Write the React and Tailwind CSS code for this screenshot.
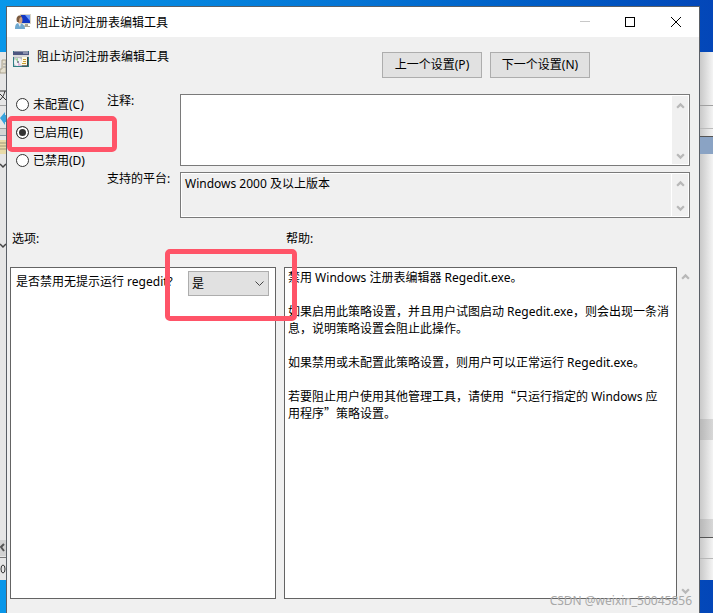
import React, { useState } from "react";

const states = [
  { value: "none", label: "未配置(C)" },
  { value: "enabled", label: "已启用(E)" },
  { value: "disabled", label: "已禁用(D)" },
];

function Chevron({ up, className }) {
  return (
    <svg viewBox="0 0 8 6" className={className} fill="none" stroke="currentColor">
      <path d={up ? "M1 5 4 2 7 5" : "M1 1 4 4 7 1"} strokeWidth="2" />
    </svg>
  );
}

function ScrollBar() {
  return (
    <div className="flex w-4 shrink-0 flex-col justify-between bg-[#f0f0f0] text-[#b8b8b8]">
      <button type="button" aria-label="向上滚动" className="flex h-[18px] items-center justify-center">
        <Chevron up className="h-[7px] w-[9px]" />
      </button>
      <button type="button" aria-label="向下滚动" className="flex h-4 items-center justify-center">
        <Chevron className="h-[7px] w-[9px]" />
      </button>
    </div>
  );
}

function UserIcon() {
  return (
    <svg viewBox="0 0 16 16" className="h-4 w-4 shrink-0">
      <rect x="5" y="0" width="11" height="10" fill="#d9d5c8" />
      <rect x="6" y="1" width="9" height="8" fill="#1238c4" />
      <path d="M10 1h5v6z" fill="#6f9cf5" />
      <path d="M10 10h3v2h2v1H9z" fill="#a9a598" />
      <path d="M0 15c0-4 1-6 4-6s6 2 6 6z" fill="#6fa8cf" />
      <path d="M3 9h3l-1 4z" fill="#e8f0f6" />
      <ellipse cx="5" cy="6" rx="2.500" ry="3.500" fill="#d4a27c" />
      <path d="M2 8C0 2 5 0 7 3c-2 0-3 1-3 5z" fill="#7b5b41" />
    </svg>
  );
}

function PolicyIcon() {
  return (
    <svg viewBox="0 0 16 16" className="h-4 w-4 shrink-0">
      <rect width="16" height="16" fill="#2f7f86" />
      <rect x="1" y="0" width="14" height="1" fill="#8d93a8" />
      <rect x="0" y="1" width="16" height="3" fill="#4c5680" />
      <path d="M10 2h5" stroke="#c9cedb" />
      <rect x="0" y="4" width="16" height="2" fill="#d8d8d8" />
      <rect x="1" y="6" width="14" height="9" fill="#b9bcc4" />
      <circle cx="5" cy="11" r="4" fill="#f1f3f6" />
      <path d="M5 11 2 8l3-1z" fill="#9fd49b" />
      <path d="m5 11 3 3-3 1z" fill="#e2b2dc" />
      <circle cx="5" cy="11" r="1" fill="#65707e" />
      <path d="M9 6h5v8H8v-2h1z" fill="#fffbe0" />
      <path d="M10 8.500h3M10 10.500h3M9 12.500h4" stroke="#c99b34" />
      <path d="M14.500 6v9H9" stroke="#444" fill="none" />
    </svg>
  );
}

// Slices of the window that sits behind the dialog
function LeftStrip() {
  return (
    <div className="flex w-[6px] shrink-0 flex-col overflow-hidden pt-[52px]">
      <svg viewBox="0 0 6 528" className="h-[528px] w-[6px]">
        <rect width="6" height="528" fill="#e6e6e6" />
        <path d="M2 8h4v13H0v-4h2z" fill="#e4dfcf" stroke="#aaa28e" />
        <path d="M3 12h3M3 15h3" stroke="#9b9b9b" />
        <path d="M0 39h6M5 39c-1 4-2 6-5 9M0 42l6 6" stroke="#333" fill="none" />
        <path d="M0 53.500h6M0 76.500h6" stroke="#a0a0a0" />
        <path d="M0 66l5-6v3h1v7H5v3z" fill="#39a3dc" />
        <rect y="77" width="6" height="6" fill="#d4d4d4" />
        <path d="M0 83.500h6" stroke="#8795a8" />
        <rect y="88" width="6" height="14" fill="#e9dba8" />
        <path d="M0 91h6M0 94h6M0 97h6" stroke="#9f9678" />
        <path d="M0 112l3 3 3-3M0 192l3 3 3-3" stroke="#444" strokeWidth="1.500" fill="none" />
        <rect y="488" width="6" height="16" fill="#d2d2d2" />
        <path d="m4 492-3 3 3 4" stroke="#555" strokeWidth="2" fill="none" />
        <path d="M0 505.500h6" stroke="#777" />
        <ellipse cx="3" cy="517" rx="2" ry="4" stroke="#333" fill="none" />
      </svg>
    </div>
  );
}

function RightStrip() {
  return (
    <div className="flex w-[13px] shrink-0 flex-col pt-[52px]">
      <div className="flex h-[528px] flex-col bg-linear-to-r from-[#c9c9c9] to-[#f4f4f4]">
        <div className="h-[53px]" />
        <div className="h-[23px] border-t border-[#a0a0a0]" />
        <div className="h-[8px] border-t border-[#bcbcbc]" />
        <div className="h-[18px] border-t border-[#555] bg-[#8aa3c4]" />
        <div className="h-[265px]" />
        <div className="h-[21px] bg-linear-to-r from-[#b8b8b8] to-[#d8d8d8]" />
        <div className="h-[79px]" />
        <div className="h-[18px] bg-linear-to-r from-[#b8b8b8] to-[#d8d8d8]" />
        <div className="h-[21px] border-t border-[#555]" />
        <div className="flex-1 border-t border-[#b8b8b8]" />
      </div>
    </div>
  );
}

// Quotation marks take a full character cell
function Quote({ children }) {
  return <span className="font-['Noto_Sans_CJK_SC',sans-serif] leading-none">{children}</span>;
}

function App() {
  const [state, setState] = useState("enabled");
  const [comment, setComment] = useState("");
  const [prompt, setPrompt] = useState("是");

  return (
    <div
      lang="zh-CN"
      className="relative flex h-screen overflow-hidden bg-linear-to-r from-[#0897ea] via-[#0574d4] to-[#0346b8] font-['Noto_Sans','Noto_Sans_CJK_SC',sans-serif] text-[12px] leading-[17px] text-black"
    >
      <LeftStrip />

      <div className="mt-[6px] flex min-w-0 flex-1 flex-col border border-b-0 border-[#5a5f66] bg-[#f0f0f0]">
        {/* Title bar */}
        <div className="flex h-[30px] shrink-0 items-center bg-white pl-2">
          <UserIcon />
          <h1 className="ml-[5px] flex-1">阻止访问注册表编辑工具</h1>
          <button type="button" aria-label="最小化" className="flex h-full w-[45px] items-center justify-center text-[#c8c8c8]">
            <svg viewBox="0 0 10 10" className="h-[10px] w-[10px]">
              <path d="M0 4.500h10" stroke="currentColor" />
            </svg>
          </button>
          <button type="button" aria-label="最大化" className="flex h-full w-[46px] items-center justify-center">
            <svg viewBox="0 0 10 10" className="h-[10px] w-[10px]">
              <rect x="0.500" y="0.500" width="9" height="9" fill="none" stroke="currentColor" />
            </svg>
          </button>
          <button type="button" aria-label="关闭" className="flex h-full w-[46px] items-center justify-center">
            <svg viewBox="0 0 10 10" className="h-[10px] w-[10px]">
              <path d="m0 0 10 10M10 0 0 10" stroke="currentColor" />
            </svg>
          </button>
        </div>

        {/* Policy name and navigation */}
        <div className="flex items-start pl-[6px] pt-[14px]">
          <PolicyIcon />
          <h2 className="ml-2 -mt-[3px] w-[345px]">阻止访问注册表编辑工具</h2>
          <div className="flex gap-2 pt-[1px]">
            <button type="button" className="h-[26px] w-[100px] border border-[#adadad] bg-[#e1e1e1] pb-[1px]">
              上一个设置(P)
            </button>
            <button type="button" className="h-[26px] w-[100px] border border-[#adadad] bg-[#e1e1e1] pb-[1px]">
              下一个设置(N)
            </button>
          </div>
        </div>

        {/* State, comment and platform */}
        <div className="mt-4 flex pl-[9px] pr-[9px]">
          <fieldset className="flex w-[91px] shrink-0 flex-col gap-2">
            {states.map((s) => (
              <label key={s.value} className="flex h-5 items-center gap-1">
                <input
                  type="radio"
                  name="state"
                  value={s.value}
                  checked={state === s.value}
                  onChange={() => setState(s.value)}
                  className="h-[13px] w-[13px] appearance-none rounded-full border border-[#333] bg-white checked:bg-[#333] checked:shadow-[inset_0_0_0_2px_white]"
                />
                {s.label}
              </label>
            ))}
          </fieldset>
          <div className="flex flex-1 flex-col gap-[6px]">
            <div className="flex h-[72px]">
              <label htmlFor="comment" className="-mt-[2px] w-[73px] shrink-0">
                注释:
              </label>
              <div className="flex flex-1 border border-[#7a7a7a] bg-white p-[1px]">
                <textarea
                  id="comment"
                  value={comment}
                  onChange={(e) => setComment(e.target.value)}
                  className="flex-1 resize-none px-[3px] outline-none"
                />
                <ScrollBar />
              </div>
            </div>
            <div className="flex h-[46px]">
              <label htmlFor="platform" className="-mt-[2px] w-[73px] shrink-0">
                支持的平台:
              </label>
              <div className="flex flex-1 gap-[1px] border border-[#7a7a7a] bg-white p-[1px]">
                <textarea
                  id="platform"
                  readOnly
                  value="Windows 2000 及以上版本"
                  className="flex-1 resize-none bg-[#f0f0f0] px-[3px] pt-[1px] outline-none"
                />
                <ScrollBar />
              </div>
            </div>
          </div>
        </div>

        {/* Options and help */}
        <div className="mt-3 flex min-h-0 flex-1 gap-2 pb-[14px] pl-[3px] pr-[6px]">
          <section className="flex w-[266px] shrink-0 flex-col">
            <h3 className="mb-5 pl-[2px]">选项:</h3>
            <div className="flex flex-1 items-start border border-[#646464] bg-white pl-[5px] pt-[3px]">
              <label htmlFor="prompt" className="mt-[2px] w-[172px] whitespace-nowrap">
                是否禁用无提示运行 regedit?
              </label>
              <div className="relative">
                <select
                  id="prompt"
                  value={prompt}
                  onChange={(e) => setPrompt(e.target.value)}
                  className="h-[25px] w-[81px] appearance-none border border-[#adadad] bg-[#e1e1e1] pl-[3px]"
                >
                  <option>是</option>
                  <option>否</option>
                </select>
                <svg viewBox="0 0 9 6" className="pointer-events-none absolute right-[5px] top-[10px] h-[6px] w-[9px]">
                  <path d="m0.500 0.500 4 4 4-4" fill="none" stroke="#444" />
                </svg>
              </div>
            </div>
          </section>
          <section className="flex min-w-0 flex-1 flex-col">
            <h3 className="mb-5 pl-[2px]">帮助:</h3>
            <div className="flex min-h-0 flex-1">
              <div className="flex-1 space-y-[17px] border border-[#646464] bg-white px-[3px] pt-[1px]">
                <p>禁用 Windows 注册表编辑器 Regedit.exe。</p>
                <p>如果启用此策略设置，并且用户试图启动 Regedit.exe，则会出现一条消息，说明策略设置会阻止此操作。</p>
                <p>如果禁用或未配置此策略设置，则用户可以正常运行 Regedit.exe。</p>
                <p>
                  若要阻止用户使用其他管理工具，请使用<Quote>“</Quote>只运行指定的 Windows 应<br />
                  用程序<Quote>”</Quote>策略设置。
                </p>
              </div>
              <ScrollBar />
            </div>
          </section>
        </div>
      </div>

      <RightStrip />

      {/* Highlight marks and watermark */}
      <div className="pointer-events-none absolute left-[7px] top-[116px] h-[36px] w-[110px] rounded-[5px] border-[5px] border-[#ff5468]" />
      <div className="pointer-events-none absolute left-[165px] top-[249px] h-[72px] w-[132px] rounded-[5px] border-[5px] border-[#ff5468]" />
      <div className="pointer-events-none absolute bottom-1 right-[21px] text-[12px] text-[#a8a8a8]">
        CSDN @weixin_50045856
      </div>
    </div>
  );
}

export default App;
